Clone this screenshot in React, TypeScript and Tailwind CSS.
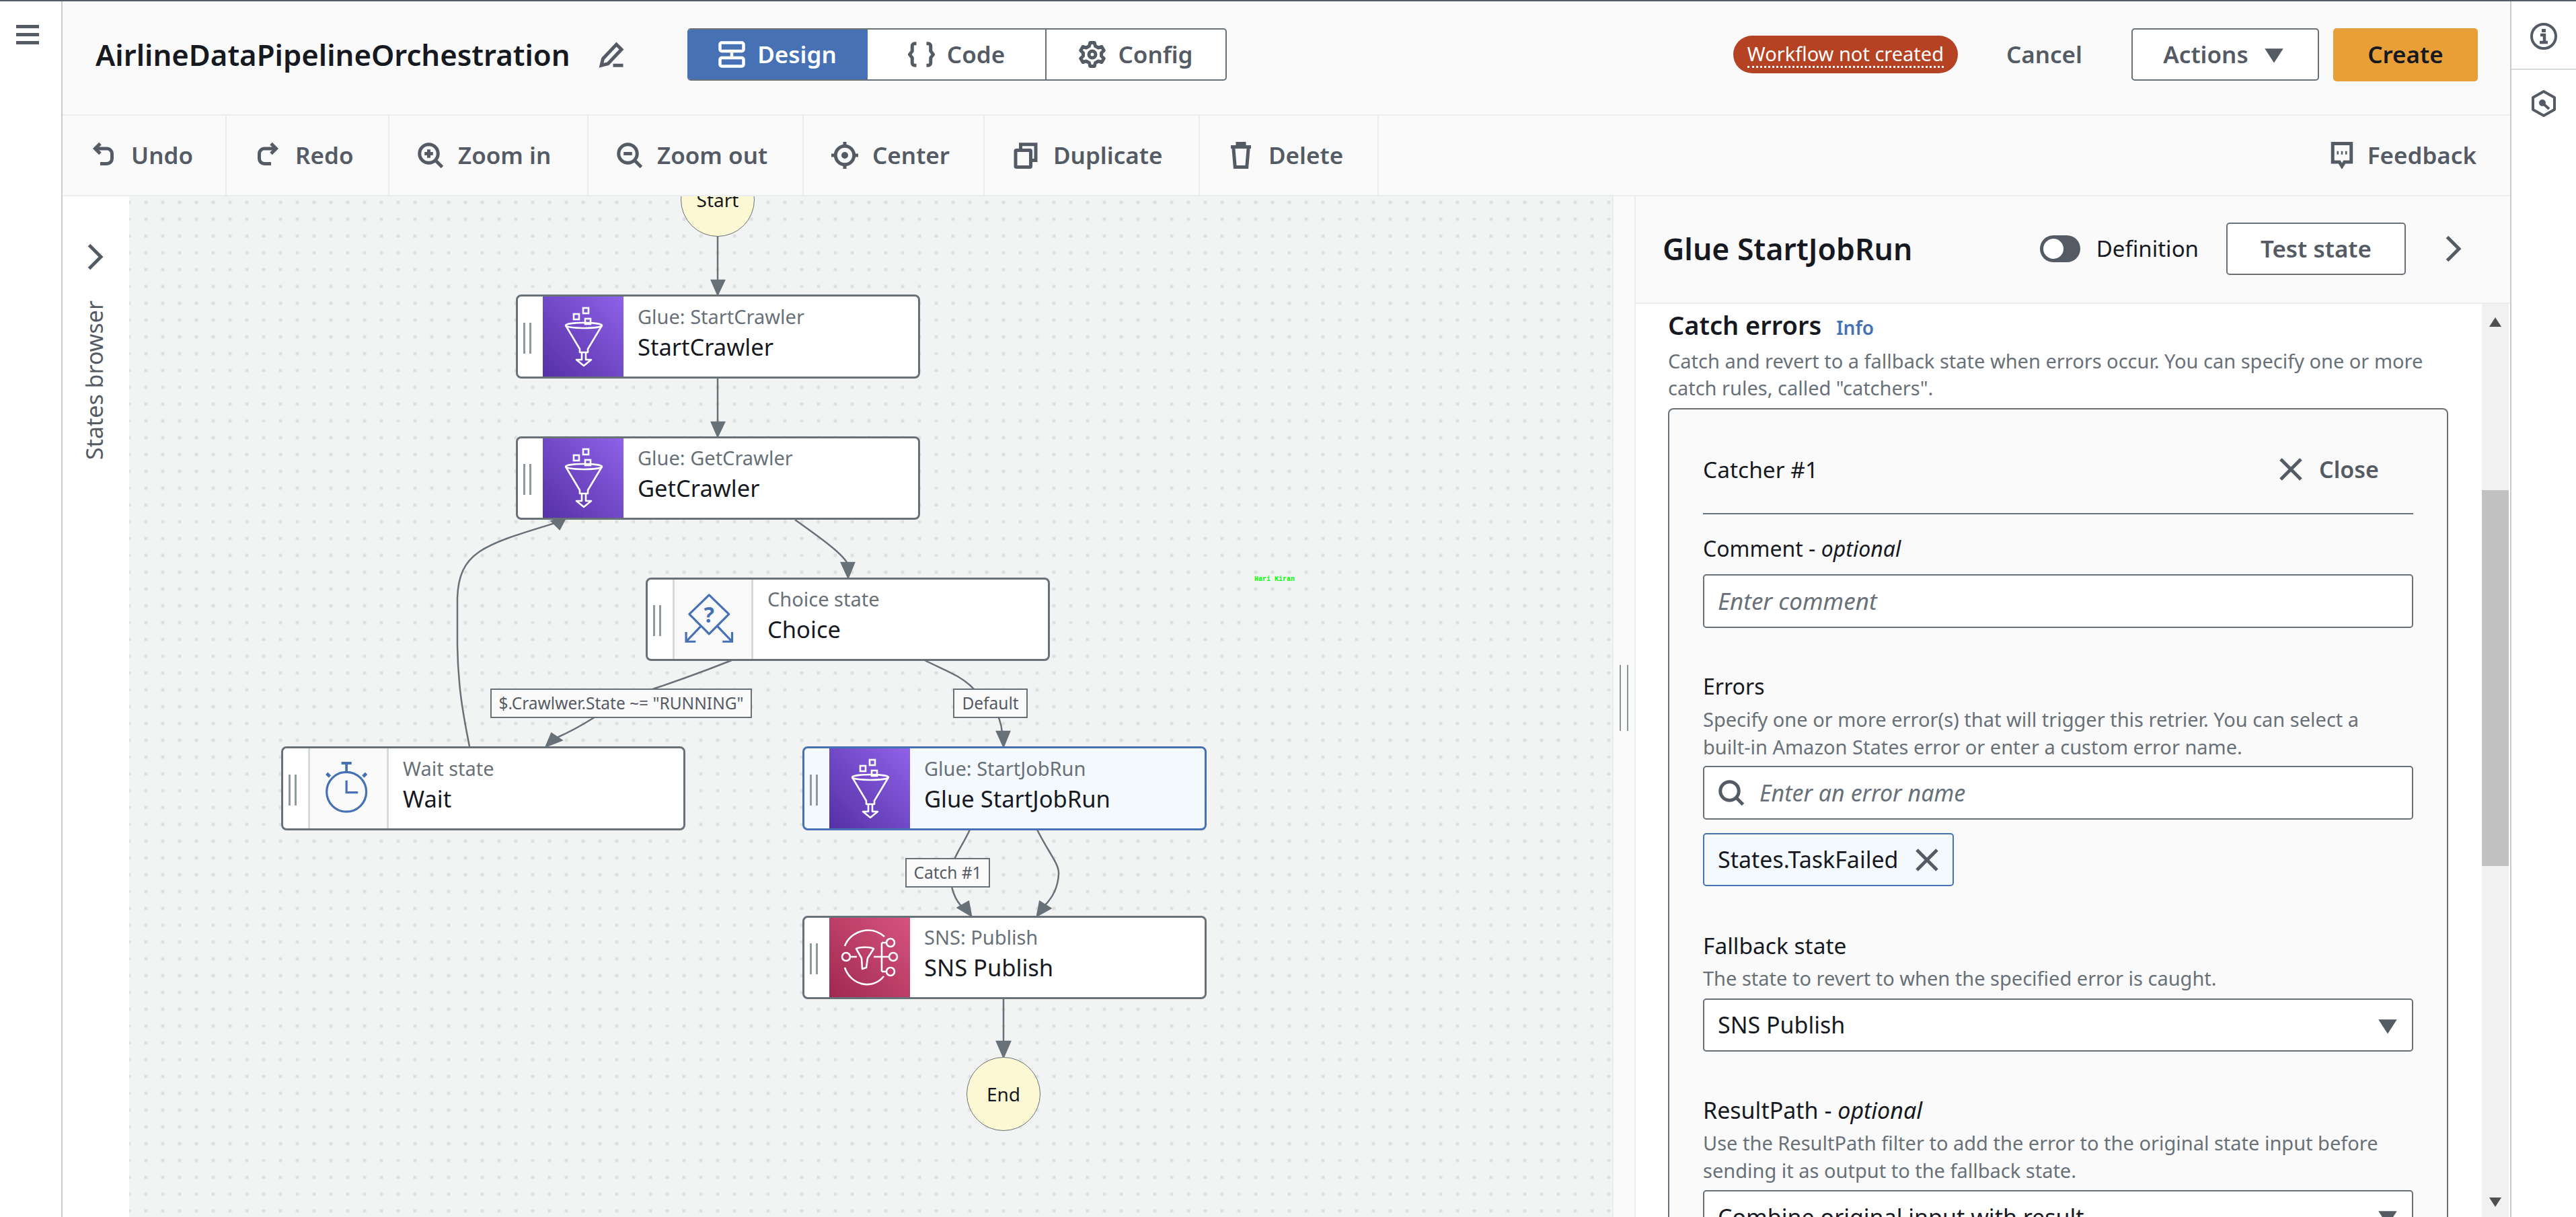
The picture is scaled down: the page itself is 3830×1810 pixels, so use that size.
import React from "react";

const Ico = ({ children, className = "" }: { children: React.ReactNode; className?: string }) => (
  <svg viewBox="0 0 16 16" fill="none" stroke="currentColor" strokeWidth="2" className={"w-[40px] h-[40px] shrink-0 " + className}>
    {children}
  </svg>
);

const tools: { label: string; w: string; icon: React.ReactNode }[] = [
  { label: "Undo", w: "w-[244px]", icon: <><path d="M6 1 3 4l3 3" /><path d="M3 4h7a3 3 0 0 1 3 3v3a3 3 0 0 1-3 3H6" /></> },
  { label: "Redo", w: "w-[242px]", icon: <><path d="m10 1 3 3-3 3" /><path d="M13 4H6a3 3 0 0 0-3 3v3a3 3 0 0 0 3 3h4" /></> },
  { label: "Zoom in", w: "w-[296px]", icon: <><circle cx="7" cy="7" r="5.5" /><path d="m11 11 4 4M7 4.5v5M4.5 7h5" /></> },
  { label: "Zoom out", w: "w-[320px]", icon: <><circle cx="7" cy="7" r="5.5" /><path d="m11 11 4 4M4.5 7h5" /></> },
  { label: "Center", w: "w-[269px]", icon: <><circle cx="8" cy="8" r="5.5" /><circle cx="8" cy="8" r="1" /><path d="M8 0v2.5M8 13.5V16M0 8h2.5M13.5 8H16" /></> },
  { label: "Duplicate", w: "w-[320px]", icon: <><rect x="2" y="5" width="9" height="10" rx="0.5" /><path d="M5 4V1.5h9V11h-2.5" /></> },
  { label: "Delete", w: "w-[266px]", icon: <><path d="M2 3h12M6 3V1h4v2M3.5 3l1 12h7l1-12" /></> },
];

const Handle = () => (
  <div className="w-[37px] shrink-0 flex justify-start gap-[6px] pl-[8px] mt-[4px]">
    <div className="w-[3px] h-[46px] bg-[#8f9a9a]" />
    <div className="w-[3px] h-[46px] bg-[#8f9a9a]" />
  </div>
);

const GlueIcon = () => (
  <div className="w-[120px] h-full shrink-0 flex items-center justify-center bg-linear-to-tr from-[#5630a6] to-[#8f62e8]">
    <svg viewBox="0 0 120 122" fill="none" stroke="#fff" strokeWidth="2.6" className="w-[120px] h-[122px]">
      <ellipse cx="61" cy="44" rx="27" ry="4" />
      <path d="M34 44 55 79v5h12v-5l21-35" strokeLinejoin="round" />
      <path d="M58 85v10h-8l11 9 11-9h-8V85" strokeLinejoin="round" />
      <rect x="46" y="27" width="8" height="8" />
      <rect x="60" y="18" width="8" height="8" />
      <rect x="63" y="34" width="8" height="8" />
    </svg>
  </div>
);

const SnsIcon = () => (
  <div className="w-[120px] h-full shrink-0 flex items-center justify-center bg-linear-to-tr from-[#a02850] to-[#d6547f]">
    <svg viewBox="0 0 120 122" fill="none" stroke="#fff" strokeWidth="2.6" className="w-[120px] h-[122px]">
      <path d="M81 30C60 12 30 22 22 44M22 76c8 25 40 35 58 13" transform="translate(1 0)" />
      <circle cx="25" cy="60" r="6" />
      <path d="M31 60h10M66 60h23M78 39v43M78 39h7M78 82h7" />
      <path d="M40 48c6-3 20-3 26 0l-9 14-2 14-6 2-1-16z" strokeLinejoin="round" />
      <circle cx="91" cy="39" r="6" />
      <circle cx="95" cy="60" r="6" />
      <circle cx="91" cy="82" r="6" />
    </svg>
  </div>
);

const ChoiceIcon = () => (
  <div className="w-[120px] h-full shrink-0 flex items-center justify-center bg-[#fafafa] border-x-[3px] border-[#d5dbdb]">
    <svg viewBox="0 0 120 122" fill="none" stroke="#4672b5" strokeWidth="3.4" className="w-[114px] h-[122px]">
      <g transform="translate(-3 0)">
        <path d="M57 23 88 53 57 84 26 53z" strokeLinejoin="round" />
        <text x="57" y="66" textAnchor="middle" fill="#4672b5" stroke="none" fontSize="34" fontWeight="700" fontFamily="Noto Sans, sans-serif">?</text>
        <path d="M44 72 21 96M21 81v15h15M70 72l23 24M93 81v15H78" />
      </g>
    </svg>
  </div>
);

const WaitIcon = () => (
  <div className="w-[120px] h-full shrink-0 flex items-center justify-center bg-[#fafafa] border-x-[3px] border-[#d5dbdb]">
    <svg viewBox="0 0 120 122" fill="none" stroke="#4672b5" strokeWidth="3.4" className="w-[114px] h-[122px]">
      <g transform="translate(0 -4)">
        <circle cx="57" cy="70" r="31" />
        <path d="M57 39V26M49 25h16" strokeWidth="4" />
        <path d="m31 46-5-5m57 5 5-5" strokeWidth="5" />
        <path d="M57 52v19h18" />
      </g>
    </svg>
  </div>
);

const FlowNode = ({ className, sub, title, icon, selected }: { className: string; sub: string; title: string; icon: React.ReactNode; selected?: boolean }) => (
  <div
    className={
      "absolute w-[601px] flex items-center rounded-[8px] border-[3px] overflow-hidden " +
      (selected ? "border-[#4672b5] bg-[#f4f9fe] " : "border-[#687078] bg-white ") +
      className
    }
  >
    <Handle />
    {icon}
    <div className="pl-[21px] pb-[12px] flex flex-col">
      <span className="text-[29px] leading-[42px] text-[#687078]">{sub}</span>
      <span className="text-[34.5px] leading-[48px] text-[#16191f]">{title}</span>
    </div>
  </div>
);

const EdgeLabel = ({ className, children }: { className: string; children: React.ReactNode }) => (
  <div className={"absolute flex items-center justify-center border-[2.5px] border-[#687078] bg-[#fafafa] text-[24.5px] text-[#545b64] whitespace-nowrap " + className}>
    {children}
  </div>
);

const Caret = ({ className = "" }: { className?: string }) => (
  <svg viewBox="0 0 16 16" className={"w-[40px] h-[40px] shrink-0 " + className} fill="#545b64">
    <path d="M2.5 4.5h11L8 13z" />
  </svg>
);

const Arrow = ({ points }: { points: string }) => <polygon points={points} fill="#687078" />;

export default function App() {
  return (
    <div className="w-[3830px] h-[1810px] flex flex-col overflow-hidden bg-white font-['Noto_Sans',sans-serif]">
      <div className="h-[2px] bg-[#545b64] shrink-0" />
      <div className="flex flex-1 min-h-0">
        <nav className="w-[93px] shrink-0 border-r-2 border-[#c8cccc] bg-white pt-[35px] pl-[24px]">
          <div className="flex flex-col gap-[7px] w-[34px]">
            <div className="h-[5px] bg-[#545b64]" />
            <div className="h-[5px] bg-[#545b64]" />
            <div className="h-[5px] bg-[#545b64]" />
          </div>
        </nav>

        <main className="w-[3639px] shrink-0 flex flex-col min-w-0">
          <header className="h-[170px] shrink-0 flex items-center bg-[#fafafa] border-b-2 border-[#eaeded] pl-[49px] pr-[48px] pb-[10px]">
            <h1 className="w-[705px] text-[43.7px] font-semibold leading-[50px] text-[#16191f] whitespace-nowrap">AirlineDataPipelineOrchestration</h1>
            <svg viewBox="0 0 16 16" fill="none" stroke="#545b64" strokeWidth="2" className="w-[40px] h-[40px] ml-[42px]">
              <path d="M9 14.500h6M2 14.500 3 10.500 11 2l3 3-8 8.500z" />
            </svg>
            <div className="ml-[93px] flex h-[78px] w-[802px] rounded-[5px] overflow-hidden border-y-2 border-[#687078] border-r-2 bg-white text-[35px] font-semibold">
              <div className="w-[268px] -my-[2px] flex items-center justify-center gap-[18px] bg-[#4672b5] border-y-2 border-[#16191f] text-white">
                <svg viewBox="0 0 16 16" fill="none" stroke="currentColor" strokeWidth="1.8" className="w-[40px] h-[40px]">
                  <rect x="1" y="1" width="14" height="5" rx="1" />
                  <rect x="1" y="10" width="14" height="5" rx="1" />
                  <path d="M8 6v4" />
                </svg>
                Design
              </div>
              <div className="w-[266px] flex items-center justify-center gap-[18px] border-r-2 border-[#687078] text-[#545b64]">
                <Ico>
                  <path d="M5 1.5H4a1.5 1.5 0 0 0-1.5 1.5v3L1 8l1.5 2v3A1.5 1.5 0 0 0 4 14.5h1M11 1.5h1A1.5 1.5 0 0 1 13.5 3v3L15 8l-1.5 2v3a1.5 1.5 0 0 1-1.5 1.5h-1" />
                </Ico>
                Code
              </div>
              <div className="flex-1 flex items-center justify-center gap-[18px] text-[#545b64]">
                <Ico>
                  <circle cx="8" cy="8" r="2" />
                  <path d="M6.7 1h2.6l.5 2 1.8 1 2-.6 1.3 2.2-1.5 1.5v1.8l1.5 1.5-1.3 2.2-2-.6-1.8 1-.5 2H6.7l-.5-2-1.8-1-2 .6-1.3-2.2 1.5-1.5V7.1L1.1 5.600l1.3-2.2 2 .6 1.8-1z" strokeLinejoin="round" />
                </Ico>
                Config
              </div>
            </div>

            <div className="ml-auto h-[56px] w-[334px] rounded-[28px] bg-[#b54223] flex items-center justify-center text-[29px] text-white">
              <span className="border-b-[3px] border-dotted border-white leading-[36px]">Workflow not created</span>
            </div>
            <span className="ml-[72px] text-[35px] font-semibold text-[#545b64]">Cancel</span>
            <div className="ml-[73px] w-[279px] h-[78px] rounded-[5px] border-2 border-[#687078] bg-white flex items-center justify-center gap-[18px] text-[35px] font-semibold text-[#545b64]">
              Actions
              <Caret />
            </div>
            <div className="ml-[21px] w-[215px] h-[79px] rounded-[5px] bg-[#e89f38] flex items-center justify-center text-[35px] font-semibold text-[#16191f]">Create</div>
          </header>

          <div className="h-[120px] shrink-0 flex items-stretch bg-[#fafafa] border-b-2 border-[#eaeded] text-[35px] font-semibold text-[#545b64]">
            {tools.map((t) => (
              <div key={t.label} className={"flex items-center gap-[21px] pl-[41px] border-r-2 border-[#eaeded] " + t.w}>
                <Ico>{t.icon}</Ico>
                <span className="whitespace-nowrap">{t.label}</span>
              </div>
            ))}
            <div className="ml-auto flex items-center gap-[18px] pr-[50px]">
              <Ico>
                <path d="M2.500 1h11v11H9.500L8 14.500 6.500 12h-4z" />
                <path d="M5 6.500h1M7.500 6.500h1M10 6.500h1" />
              </Ico>
              Feedback
            </div>
          </div>

          <div className="flex-1 min-h-0 flex">
            <div className="w-[99px] shrink-0 bg-white flex flex-col items-center pt-[70px] pr-[6px] text-[#545b64]">
              <svg viewBox="0 0 16 16" fill="none" stroke="currentColor" strokeWidth="2" className="w-[40px] h-[40px]">
                <path d="m5 1 7 7-7 7" />
              </svg>
              <span className="mt-[45px] text-[34px] leading-[40px] [writing-mode:vertical-rl] rotate-180 whitespace-nowrap">States browser</span>
            </div>

            <div className="relative w-[2205px] shrink-0 overflow-hidden bg-[#f2f3f3] bg-[radial-gradient(circle,#dedfdf_2.5px,transparent_3px)] bg-[size:25px_25px] bg-[position:-12.5px_-3.5px]">
              <svg viewBox="192 292 2205 1518" fill="none" stroke="#687078" strokeWidth="2.5" className="absolute inset-0 w-[2205px] h-[1518px]">
                <path d="M1067 352V420" />
                <Arrow points="1067,438 1058,417 1077,417" />
                <path d="M1067 562V630" />
                <Arrow points="1067,649 1058,628 1077,628" />
                <path d="M1182 773C1220 800 1255 825 1261 840" />
                <Arrow points="1261,859 1251,837 1270,837" />
                <path d="M1088 982Q1030 1005 973 1024Q920 1045 882 1068Q855 1085 828 1097" />
                <Arrow points="812,1110 820,1091 835,1101" />
                <path d="M698 1110C688 1060 681 1020 680 960L680 890C682 820 720 810 825 778" />
                <Arrow points="841,770 820,775 832,787" />
                <path d="M1375 982C1400 995 1430 1005 1447 1024C1470 1040 1488 1060 1490 1090" />
                <Arrow points="1492,1110 1482,1088 1501,1088" />
                <path d="M1442 1234C1430 1260 1416 1275 1413 1300C1413 1320 1420 1340 1432 1350" />
                <Arrow points="1444,1362 1424,1350 1440,1341" />
                <path d="M1542 1234C1560 1270 1575 1285 1574 1300C1573 1320 1565 1335 1553 1347" />
                <Arrow points="1542,1362 1546,1341 1562,1351" />
                <path d="M1492 1485V1552" />
                <Arrow points="1492,1572 1482,1549 1502,1549" />
              </svg>

              <div className="absolute left-[820px] top-[-50px] w-[110px] h-[110px] rounded-full border-[1.5px] border-[#687078] bg-[#fcf8d3] flex items-center justify-center text-[28px] text-[#16191f]">Start</div>
              <div className="absolute left-[1245px] top-[1280px] w-[110px] h-[110px] rounded-full border-[1.5px] border-[#687078] bg-[#fcf8d3] flex items-center justify-center text-[28px] text-[#16191f]">End</div>

              <FlowNode className="left-[575px] top-[146px] h-[125px]" sub="Glue: StartCrawler" title="StartCrawler" icon={<GlueIcon />} />
              <FlowNode className="left-[575px] top-[357px] h-[124px]" sub="Glue: GetCrawler" title="GetCrawler" icon={<GlueIcon />} />
              <FlowNode className="left-[768px] top-[567px] h-[124px]" sub="Choice state" title="Choice" icon={<ChoiceIcon />} />
              <FlowNode className="left-[226px] top-[818px] h-[125px]" sub="Wait state" title="Wait" icon={<WaitIcon />} />
              <FlowNode className="left-[1001px] top-[818px] h-[125px]" sub="Glue: StartJobRun" title="Glue StartJobRun" icon={<GlueIcon />} selected />
              <FlowNode className="left-[1001px] top-[1070px] h-[124px]" sub="SNS: Publish" title="SNS Publish" icon={<SnsIcon />} />

              <EdgeLabel className="left-[537px] top-[732px] w-[389px] h-[44px]">$.Crawlwer.State ~= "RUNNING"</EdgeLabel>
              <EdgeLabel className="left-[1225px] top-[732px] w-[111px] h-[44px]">Default</EdgeLabel>
              <EdgeLabel className="left-[1154px] top-[984px] w-[126px] h-[44px]">Catch #1</EdgeLabel>

              <span className="absolute left-[1673px] top-[564px] font-['Liberation_Mono',monospace] text-[10px] leading-[12px] font-bold text-[#00ff00] whitespace-nowrap">Hari Kiran</span>
            </div>

            <div className="w-[35px] shrink-0 bg-[#fafafa] border-x-2 border-[#eaeded] flex justify-center gap-[9px] pt-[697px]">
              <div className="w-[2px] h-[98px] bg-[#879596]" />
              <div className="w-[2px] h-[98px] bg-[#879596]" />
            </div>

            <aside className="flex-1 min-w-0 flex flex-col">
              <div className="h-[160px] shrink-0 bg-[#fafafa] border-b-2 border-[#eaeded] flex items-center pl-[40px] pr-[66px] pb-[2px]">
                <h2 className="text-[44.5px] font-semibold text-[#16191f] whitespace-nowrap">Glue StartJobRun</h2>
                <div className="ml-auto w-[60px] h-[40px] rounded-[20px] bg-[#545b64] flex items-center pl-[5px]">
                  <div className="w-[30px] h-[30px] rounded-full bg-white" />
                </div>
                <span className="ml-[24px] text-[33px] text-[#16191f]">Definition</span>
                <div className="ml-[41px] w-[267px] h-[78px] rounded-[5px] border-2 border-[#687078] bg-white flex items-center justify-center text-[35px] font-semibold text-[#545b64]">Test state</div>
                <svg viewBox="0 0 16 16" fill="none" stroke="#545b64" strokeWidth="2" className="w-[40px] h-[40px] ml-[49px]">
                  <path d="m5 1 7 7-7 7" />
                </svg>
              </div>

              <div className="flex-1 min-h-0 flex">
                <div className="w-[1258px] shrink-0 overflow-hidden bg-white pl-[48px]">
                  <div className="mt-[11px] flex items-baseline gap-[22px]">
                    <h3 className="text-[38px] leading-[40px] font-semibold text-[#16191f]">Catch errors</h3>
                    <span className="text-[28px] leading-[40px] font-semibold text-[#4672b5]">Info</span>
                  </div>
                  <p className="mt-[10px] w-[1150px] text-[29px] leading-[40px] text-[#687078]">
                    Catch and revert to a fallback state when errors occur. You can specify one or more catch rules, called "catchers".
                  </p>
                  <div className="mt-[10px] w-[1160px] rounded-t-[8px] border-2 border-[#687078] bg-[#fafafa] px-[50px] pt-[65px] h-[1300px]">
                    <div className="flex justify-between items-center h-[48px] pr-[51px]">
                      <span className="text-[33.5px] text-[#16191f]">Catcher #1</span>
                      <span className="flex items-center gap-[22px] text-[34px] font-semibold text-[#545b64]">
                        <svg viewBox="0 0 16 16" fill="none" stroke="currentColor" strokeWidth="2" className="w-[40px] h-[40px]">
                          <path d="m2 2 12 12M14 2 2 14" />
                        </svg>
                        Close
                      </span>
                    </div>
                    <div className="mt-[41px] h-[2px] bg-[#687078]" />

                    <div className="mt-[29px] text-[32px] leading-[44px] text-[#16191f]">Comment - <em>optional</em></div>
                    <div className="mt-[16px] h-[80px] rounded-[5px] border-2 border-[#687078] bg-white flex items-center pl-[20px] text-[35px] italic text-[#687078]">Enter comment</div>

                    <div className="mt-[65px] text-[32px] leading-[44px] text-[#16191f]">Errors</div>
                    <p className="mt-[6px] text-[29px] leading-[41px] text-[#687078]">
                      Specify one or more error(s) that will trigger this retrier. You can select a<br />
                      built-in Amazon States error or enter a custom error name.
                    </p>
                    <div className="mt-[8px] h-[80px] rounded-[5px] border-2 border-[#687078] bg-white flex items-center pl-[20px] gap-[22px] text-[34px] italic text-[#687078]">
                      <Ico className="text-[#545b64]">
                        <circle cx="7" cy="7" r="5.500" />
                        <path d="m11 11 4 4" />
                      </Ico>
                      Enter an error name
                    </div>
                    <div className="mt-[20px] w-[373px] h-[79px] rounded-[5px] border-2 border-[#4672b5] bg-[#f4f9fe] flex items-center justify-between pl-[20px] pr-[18px] text-[34px] text-[#16191f]">
                      States.TaskFailed
                      <Ico className="text-[#545b64]"><path d="m2 2 12 12M14 2 2 14" /></Ico>
                    </div>

                    <div className="mt-[66px] text-[33.5px] leading-[44px] text-[#16191f]">Fallback state</div>
                    <p className="mt-[6px] text-[29px] leading-[41px] text-[#687078]">The state to revert to when the specified error is caught.</p>
                    <div className="mt-[10px] h-[79px] rounded-[5px] border-2 border-[#687078] bg-white flex items-center justify-between pl-[20px] pr-[16px] text-[34px] text-[#16191f]">
                      SNS Publish
                      <Caret />
                    </div>

                    <div className="mt-[65px] text-[34px] leading-[44px] text-[#16191f]">ResultPath - <em>optional</em></div>
                    <p className="mt-[6px] text-[29px] leading-[41px] text-[#687078]">
                      Use the ResultPath filter to add the error to the original state input before<br />
                      sending it as output to the fallback state.
                    </p>
                    <div className="mt-[9px] h-[80px] rounded-[5px] border-2 border-[#687078] bg-white flex items-center justify-between pl-[20px] pr-[16px] text-[34px] text-[#16191f]">
                      Combine original input with result
                      <Caret />
                    </div>
                  </div>
                </div>

                <div className="w-[40px] shrink-0 bg-[#f1f1f1] flex flex-col">
                  <div className="h-[277px] shrink-0 flex justify-center pt-[17px]">
                    <svg viewBox="0 0 20 20" className="w-[20px] h-[20px]" fill="#505050"><path d="M10 3 19 17H1z" /></svg>
                  </div>
                  <div className="h-[559px] shrink-0 bg-[#c1c1c1]" />
                  <div className="mt-auto flex justify-center pb-[12px]">
                    <svg viewBox="0 0 20 20" className="w-[20px] h-[20px]" fill="#505050"><path d="M10 17 19 3H1z" /></svg>
                  </div>
                </div>
              </div>
            </aside>
          </div>
        </main>

        <div className="flex-1 min-w-0 bg-white border-l-2 border-[#c8cccc] flex flex-col text-[#545b64]">
          <div className="h-[102px] shrink-0 border-b-2 border-[#d5dbdb] flex items-center justify-center pt-[4px]">
            <svg viewBox="0 0 40 40" fill="none" stroke="currentColor" strokeWidth="4" className="w-[40px] h-[40px]">
              <circle cx="20" cy="20" r="18" />
              <rect x="17" y="9" width="6" height="5" fill="currentColor" stroke="none" />
              <path d="M15 18h6v10M14 29h12" strokeWidth="4.500" />
            </svg>
          </div>
          <div className="flex justify-center pt-[30px]">
            <svg viewBox="0 0 40 40" fill="none" stroke="currentColor" strokeWidth="4" className="w-[40px] h-[40px]">
              <path d="M20 2 36 11v18L20 38 4 29V11z" strokeLinejoin="round" />
              <circle cx="18" cy="19" r="5" fill="currentColor" stroke="none" />
              <path d="m19 20 9 8" />
            </svg>
          </div>
        </div>
      </div>
    </div>
  );
}
